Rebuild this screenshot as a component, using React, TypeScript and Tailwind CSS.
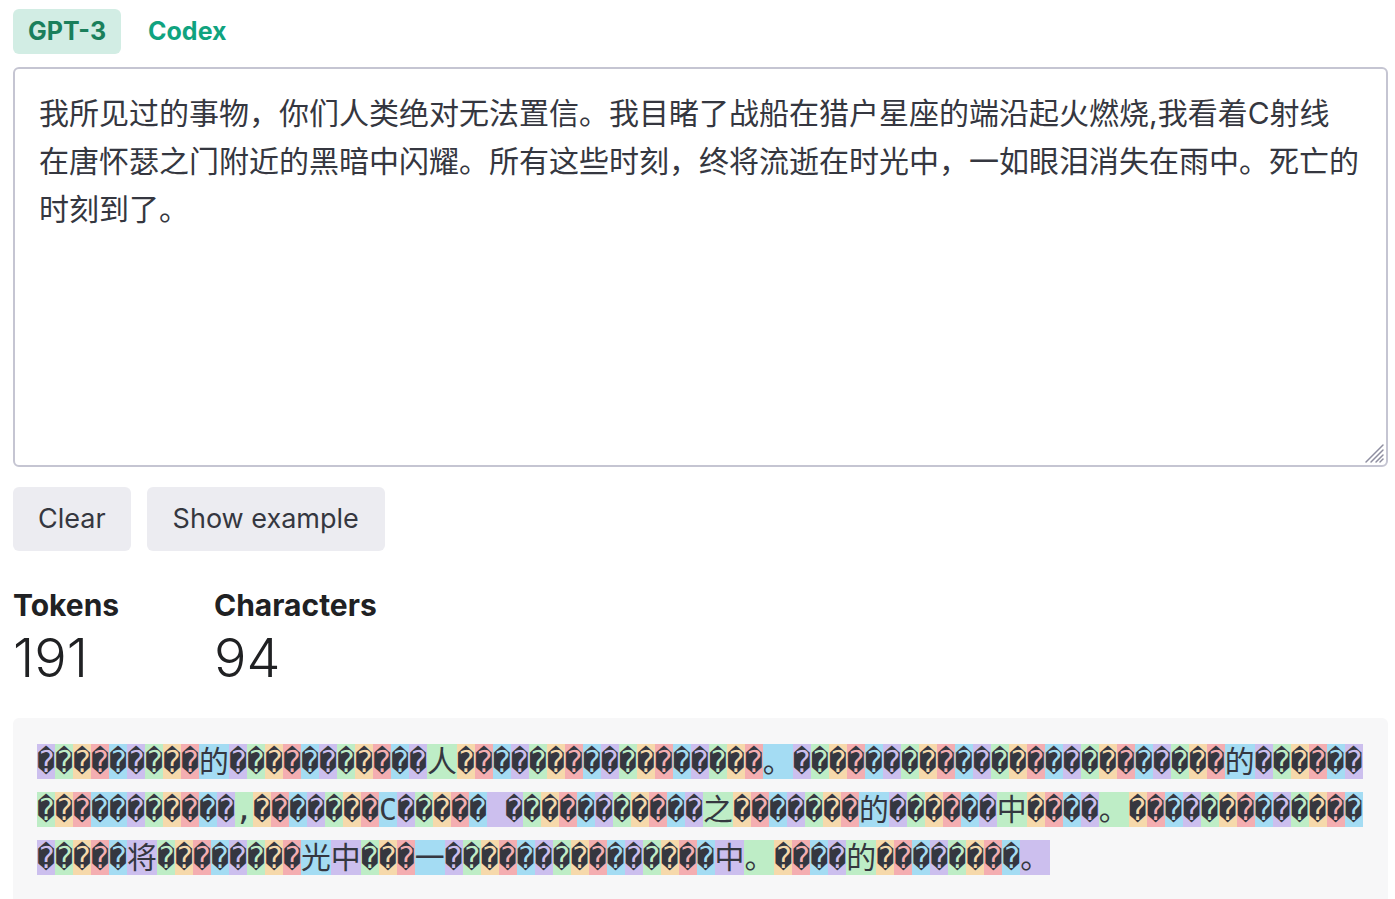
const R = '\uFFFD'

// token background colours cycle in this order
const COLORS = [
  'bg-[rgba(107,64,216,0.3)]',
  'bg-[rgba(104,222,122,0.4)]',
  'bg-[rgba(244,172,54,0.4)]',
  'bg-[rgba(239,65,70,0.4)]',
  'bg-[rgba(39,181,234,0.4)]',
]

// number = that many partial-byte tokens, string = a token as shown
const RUNS: (number | string)[] = [
  9, '的', 11, '人', 17, '。', 24, '的', 9, R + R, 6, ',', 7, 'C', 5, ' ' + R, 10, '之', 7, '的', 6, '中', 4, '。',
  18, '将', 8, '光', '中', 3, '一', 15, '中', '。', 4, '的', 8, '。',
]
const TOKENS = RUNS.flatMap(r => (typeof r === 'number' ? Array<string>(r).fill(R) : [r]))

const TEXT =
  '我所见过的事物，你们人类绝对无法置信。我目睹了战船在猎户星座的端沿起火燃烧,我看着C射线 在唐怀瑟之门附近的黑暗中闪耀。所有这些时刻，终将流逝在时光中，一如眼泪消失在雨中。死亡的时刻到了。'

export default function App() {
  return (
    <div className="min-h-screen bg-white pl-[13px] pr-[7px] pt-[9px] font-['Inter','Noto_Sans_CJK_SC',sans-serif] text-[#353740]">
      {/* Model tabs */}
      <div className="flex items-center gap-3">
        <button className="h-[45px] px-[15px] rounded-[6px] bg-[#d2ede4] text-[#1a7f5b] text-[25px] font-bold">
          GPT-3
        </button>
        <button className="h-[45px] px-[15px] rounded-[6px] text-[#10a37f] text-[25px] font-bold">Codex</button>
      </div>

      <div className="relative mt-[13px]">
        <textarea
          defaultValue={TEXT}
          className="block w-full h-[400px] border-2 border-[#c5c5d2] rounded-[6px] px-[24px] pt-[20px] text-[30px] leading-[48px] text-[#353740] outline-none resize-none"
        />
        {/* resize grip */}
        <svg className="absolute right-[3px] bottom-[3px] w-[22px] h-[22px] pointer-events-none" viewBox="0 0 22 22">
          <g stroke="#8e8ea0" strokeWidth="1.5" strokeLinecap="round">
            <line x1="3" y1="20" x2="20" y2="3" />
            <line x1="8" y1="20" x2="20" y2="8" />
            <line x1="13" y1="20" x2="20" y2="13" />
            <line x1="17" y1="20" x2="20" y2="17" />
          </g>
        </svg>
      </div>

      <div className="flex gap-4 mt-[20px]">
        <button className="h-[64px] px-[25px] rounded-[6px] bg-[#ececf1] text-[27px] text-[#353740]">Clear</button>
        <button className="h-[64px] px-[26px] rounded-[6px] bg-[#ececf1] text-[27px] text-[#353740]">Show example</button>
      </div>

      {/* Stats */}
      <div className="flex mt-[35px] text-[#202123]">
        <div className="w-[201px]">
          <div className="text-[30px] font-bold leading-[38px]">Tokens</div>
          <div className="text-[54px] font-light leading-[68px]">191</div>
        </div>
        <div>
          <div className="text-[30px] font-bold leading-[38px]">Characters</div>
          <div className="text-[54px] font-light leading-[68px]">94</div>
        </div>
      </div>

      {/* Tokenized text */}
      <div className="mt-[26px] rounded-[6px] bg-[#f7f7f8] pl-[24px] pr-[22px] pt-[20px] pb-[24px]">
        <div className="font-['DejaVu_Sans_Mono','Noto_Sans_CJK_SC',monospace] text-[29.9px] leading-[48px] whitespace-pre-wrap break-all text-[#353740]">
          {TOKENS.map((t, i) => (
            <span key={i} className={COLORS[i % 5]}>
              {t}
            </span>
          ))}
        </div>
      </div>
    </div>
  )
}
